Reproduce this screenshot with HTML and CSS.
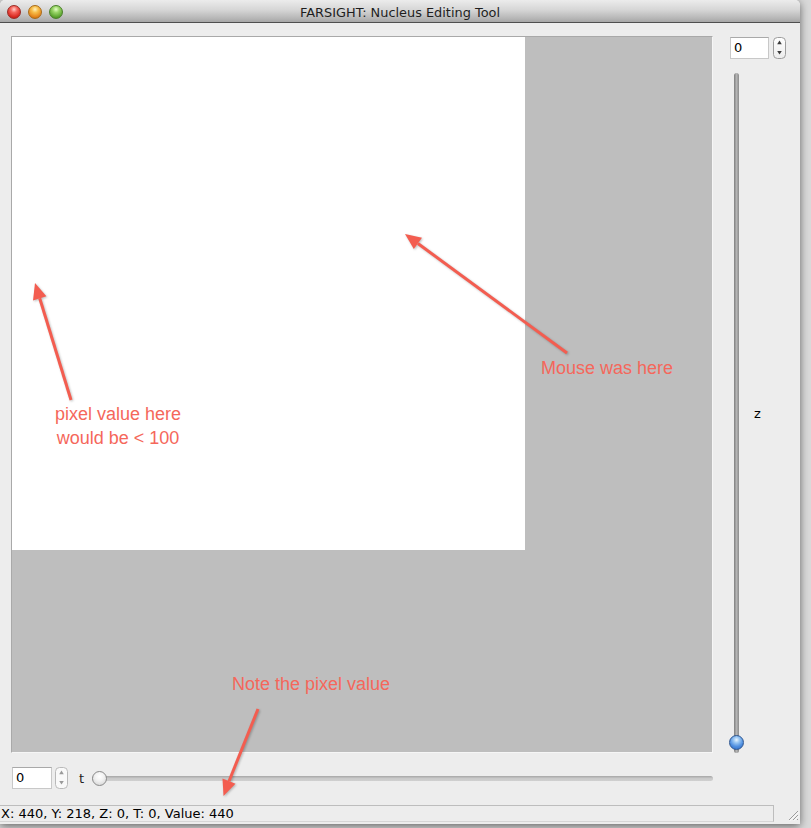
FILE: index.html
```html
<!DOCTYPE html>
<html>
<head>
<meta charset="utf-8">
<title>FARSIGHT: Nucleus Editing Tool</title>
<link rel="stylesheet" href="styles.css">
</head>
<body>
<div class="window">
  <div class="titlebar">
    <div class="lights">
      <span class="light red"></span>
      <span class="light yellow"></span>
      <span class="light green"></span>
    </div>
    <div class="title">FARSIGHT: Nucleus Editing Tool</div>
    <div></div>
  </div>

  <div class="main">
    <div class="viewer">
      <div class="image"></div>
    </div>
    <div class="side">
      <div class="spin-row">
        <div class="spinbox">0</div>
        <svg class="stepper" width="13" height="22" viewBox="0 0 13 22">
          <defs>
            <linearGradient id="stg" x1="0" y1="0" x2="0" y2="1">
              <stop offset="0" stop-color="#ffffff"/>
              <stop offset="1" stop-color="#ececec"/>
            </linearGradient>
          </defs>
          <rect x="0.5" y="0.5" width="12" height="21" rx="4" fill="url(#stg)" stroke="#9d9d9d"/>
          <path d="M4.2 7.2 L6.5 3.6 L8.8 7.2Z" fill="#3a3a3a"/>
          <path d="M4.2 14 L6.5 17.6 L8.8 14Z" fill="#3a3a3a"/>
        </svg>
      </div>
      <div class="vslider-row">
        <div class="vslider">
          <div class="vtrack"></div>
          <div class="vknob"></div>
        </div>
        <div class="zlabel">z</div>
      </div>
    </div>
  </div>

  <div class="bottom-row">
    <div class="spinbox spinbox-wide">0</div>
    <svg class="stepper" width="13" height="22" viewBox="0 0 13 22">
      <rect x="0.5" y="0.5" width="12" height="21" rx="4" fill="#f9f9f9" stroke="#b9b9b9"/>
      <path d="M4.2 7.2 L6.5 3.6 L8.8 7.2Z" fill="#9a9a9a"/>
      <path d="M4.2 14 L6.5 17.6 L8.8 14Z" fill="#9a9a9a"/>
    </svg>
    <div class="tlabel">t</div>
    <div class="hslider">
      <div class="htrack"></div>
      <div class="hknob"></div>
    </div>
  </div>

  <div class="footer">
    <div class="status">X: 440, Y: 218, Z: 0, T: 0, Value: 440</div>
    <svg class="grip" width="12" height="12" viewBox="0 0 12 12">
      <path d="M11 2 L2 11 M11 6 L6 11 M11 10 L10 11" stroke="#9a9a9a" stroke-width="1"/>
      <path d="M11.8 2.8 L2.8 11.8 M11.8 6.8 L6.8 11.8" stroke="#ffffff" stroke-width="0.8"/>
    </svg>
  </div>
</div>

<div class="overlay">
  <svg class="arrows" width="811" height="828" viewBox="0 0 811 828">
    <g fill="#f35d50" stroke="#f35d50">
      <line x1="71" y1="400" x2="39.7" y2="298.3" stroke-width="3"/>
      <polygon points="35,283 46.4,296.2 33,300.4" stroke="none"/>
      <line x1="567" y1="353" x2="417.9" y2="243.5" stroke-width="3"/>
      <polygon points="405,234 422,237.8 413.8,249.1" stroke="none"/>
      <line x1="258" y1="709" x2="229" y2="781.2" stroke-width="3"/>
      <polygon points="223.5,796 222.5,778.6 235.5,783.8" stroke="none"/>
    </g>
  </svg>
  <div class="note note-pixel">pixel value here<br>would be &lt; 100</div>
  <div class="note note-mouse">Mouse was here</div>
  <div class="note note-value">Note the pixel value</div>
</div>
</body>
</html>
```

FILE: styles.css
```css
html, body {
  margin: 0;
  padding: 0;
}

body {
  width: 811px;
  height: 828px;
  overflow: hidden;
  position: relative;
  background: #d9d9d9;
  font-family: "DejaVu Sans", sans-serif;
  color: #000;
}

.window {
  width: 800px;
  height: 824px;
  background: #ededed;
  display: flex;
  flex-direction: column;
  box-shadow: 0 2px 9px rgba(0, 0, 0, 0.55);
  border-radius: 5px 5px 0 0;
  overflow: hidden;
}

/* Title bar */
.titlebar {
  height: 22px;
  flex: none;
  border-bottom: 1px solid #4f4f4f;
  background: linear-gradient(#ececec, #d6d6d6 45%, #b9b9b9 80%, #a7a7a7);
  display: grid;
  grid-template-columns: 1fr auto 1fr;
  align-items: center;
}

.lights {
  display: flex;
  gap: 7px;
  padding-left: 7px;
  padding-top: 2px;
}

.light {
  width: 14px;
  height: 14px;
  border-radius: 50%;
  box-sizing: border-box;
}

.red {
  background: radial-gradient(circle at 50% 28%, #ffd0cc 0, #f5675e 30%, #d92a22 70%, #a9140f 100%);
  border: 1px solid #9a2a24;
}

.yellow {
  background: radial-gradient(circle at 50% 28%, #fff0c0 0, #f7c04c 30%, #e5861c 70%, #b05d0c 100%);
  border: 1px solid #a86a18;
}

.green {
  background: radial-gradient(circle at 50% 28%, #e6ffc8 0, #9bd66a 30%, #5ea631 70%, #3a7a1a 100%);
  border: 1px solid #4a7f2a;
}

.title {
  font-size: 12.9px;
  line-height: 16px;
  padding-top: 3px;
  color: #1e1e1e;
  white-space: nowrap;
}

/* Main area */
.main {
  display: flex;
  padding: 13px 0 0 11px;
}

.viewer {
  width: 700px;
  height: 715px;
  background: #bebebe;
  border: 1px solid;
  border-color: #a9a9a9 #f6f6f6 #f6f6f6 #a9a9a9;
  flex: none;
}

.image {
  width: 513px;
  height: 513px;
  background: #ffffff;
}

.side {
  margin-left: 16px;
  display: flex;
  flex-direction: column;
}

.spin-row {
  display: flex;
  gap: 4px;
  padding-left: 1px;
  margin-top: 1px;
}

.spinbox {
  width: 39px;
  height: 22px;
  box-sizing: border-box;
  border: 1px solid #c8c8c8;
  border-top-color: #a9a9a9;
  background: #ffffff;
  font-size: 13px;
  line-height: 20px;
  padding-left: 3px;
}

.stepper {
  display: block;
  flex: none;
}

.vslider-row {
  display: flex;
  align-items: center;
  margin-top: 14px;
}

.vslider {
  width: 15px;
  height: 680px;
  position: relative;
  display: flex;
  justify-content: center;
}

.vtrack {
  width: 5px;
  height: 100%;
  border-radius: 3px;
  background: linear-gradient(90deg, #7e7e7e, #b4b4b4 50%, #8c8c8c);
}

.vknob {
  position: absolute;
  left: 0;
  bottom: 3px;
  width: 15px;
  height: 15px;
  box-sizing: border-box;
  border-radius: 50%;
  border: 1px solid #2f5791;
  background: radial-gradient(circle at 50% 30%, #eaf5ff 0, #9cc8f3 25%, #4f8fe0 60%, #2a66c0 100%);
}

.zlabel {
  margin-left: 10px;
  font-size: 13px;
}

/* Bottom row */
.bottom-row {
  display: flex;
  align-items: center;
  height: 22px;
  margin-top: 14px;
  padding-left: 12px;
}

.spinbox-wide {
  width: 40px;
  margin-right: 3px;
}

.tlabel {
  font-size: 13px;
  margin-left: 11px;
  margin-right: 8px;
  color: #222;
}

.hslider {
  width: 621px;
  height: 15px;
  position: relative;
  display: flex;
  align-items: center;
}

.htrack {
  width: 100%;
  height: 5px;
  border-radius: 3px;
  background: linear-gradient(#a6a6a6, #c9c9c9 50%, #d0d0d0);
}

.hknob {
  position: absolute;
  left: 0;
  top: 0;
  width: 15px;
  height: 15px;
  box-sizing: border-box;
  border-radius: 50%;
  border: 1px solid #8a8a8a;
  background: radial-gradient(circle at 50% 35%, #ffffff 0, #f2f2f2 40%, #cfcfcf 100%);
}

/* Status bar */
.footer {
  display: flex;
  align-items: flex-end;
  margin-top: 16px;
}

.status {
  width: 774px;
  height: 17px;
  box-sizing: border-box;
  border: 1px solid #bdbdbd;
  border-left: none;
  border-bottom-color: #d6d6d6;
  font-size: 13px;
  line-height: 15px;
  padding-left: 1px;
  white-space: nowrap;
  color: #000;
}

.grip {
  display: block;
  margin-left: 13px;
  margin-bottom: 1px;
}

/* Annotations layered over the screenshot */
.overlay {
  position: absolute;
  left: 0;
  top: 0;
  width: 811px;
  height: 828px;
  pointer-events: none;
}

.arrows {
  display: block;
  filter: drop-shadow(1px 1px 1px rgba(0, 0, 0, 0.25));
}

.note {
  position: absolute;
  font-family: "Liberation Sans", Arial, sans-serif;
  font-size: 18px;
  line-height: 24px;
  color: #f5675b;
  white-space: nowrap;
}

.note-pixel {
  left: 38px;
  top: 402px;
  width: 160px;
  text-align: center;
}

.note-mouse {
  left: 541px;
  top: 356px;
}

.note-value {
  left: 232px;
  top: 672px;
}
```
